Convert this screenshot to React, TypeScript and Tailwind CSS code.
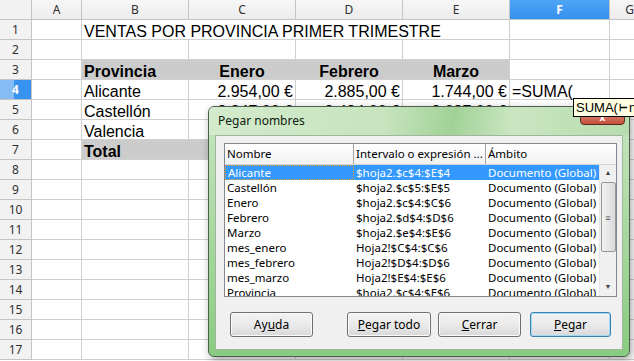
import React from "react";

const cols = [
  { key: "A", w: 50 },
  { key: "B", w: 107 },
  { key: "C", w: 107 },
  { key: "D", w: 107 },
  { key: "E", w: 107 },
  { key: "F", w: 100 },
  { key: "G", w: 40 },
];

const sheetFont = { fontFamily: '"Liberation Sans", Arial, sans-serif' };
const uiFont = { fontFamily: '"Noto Sans", "Open Sans", sans-serif' };

type Cell = { text?: string; align?: "left" | "right" | "center"; bold?: boolean; gray?: boolean };

const data: Record<number, Record<string, Cell>> = {
  3: {
    B: { text: "Provincia", bold: true, gray: true },
    C: { text: "Enero", bold: true, gray: true, align: "center" },
    D: { text: "Febrero", bold: true, gray: true, align: "center" },
    E: { text: "Marzo", bold: true, gray: true, align: "center" },
  },
  4: {
    B: { text: "Alicante" },
    C: { text: "2.954,00 €", align: "right" },
    D: { text: "2.885,00 €", align: "right" },
    E: { text: "1.744,00 €", align: "right" },
    F: { text: "=SUMA(" },
  },
  5: {
    B: { text: "Castellón" },
    C: { text: "3.347,00 €", align: "right" },
    D: { text: "2.484,00 €", align: "right" },
    E: { text: "2.087,00 €", align: "right" },
  },
  6: { B: { text: "Valencia" } },
  7: {
    B: { text: "Total", bold: true, gray: true },
    C: { gray: true },
    D: { gray: true },
    E: { gray: true },
  },
};

function SheetRow({ n }: { n: number }) {
  const active = n === 4;
  const row = data[n] || {};
  return (
    <div className="flex h-[20px]">
      <div
        className={`w-[32px] shrink-0 flex items-center justify-center border-r border-b border-[#c4c4c4] text-[12px] ${
          active
            ? "bg-[linear-gradient(to_right,#85bcf4_46%,#3893f0_46%)] text-white font-bold"
            : "bg-[#f2f2f2] text-[#303030]"
        }`}
        style={uiFont}
      >
        {n}
      </div>
      {n === 1 ? (
        <>
          <div className="w-[50px] shrink-0 border-r border-b border-[#d0d0d0] bg-white" />
          <div className="w-[428px] shrink-0 border-r border-b border-[#d0d0d0] bg-white text-[16px] leading-[19px] pt-[2px] text-black pl-[2px] whitespace-nowrap">
            VENTAS POR PROVINCIA PRIMER TRIMESTRE
          </div>
          <div className="w-[100px] shrink-0 border-r border-b border-[#d0d0d0] bg-white" />
          <div className="flex-1 border-b border-[#d0d0d0] bg-white" />
        </>
      ) : (
        cols.map((c, idx) => {
          const cell = row[c.key];
          const gray = cell?.gray;
          const nk = cols[idx + 1]?.key;
          const nextGray = nk ? row[nk]?.gray : false;
          const rightBorder = gray && nextGray ? "border-r-[#cccccc]" : "border-r-[#d0d0d0]";
          return (
            <div
              key={c.key}
              className={`shrink-0 border-r border-b border-b-[#d0d0d0] ${rightBorder} flex text-[16px] leading-[19px] pt-[2px] text-black whitespace-nowrap ${
                gray ? "bg-[#cccccc]" : "bg-white"
              } ${cell?.bold ? "font-bold" : ""} ${
                cell?.align === "right"
                  ? "justify-end pr-[2px]"
                  : cell?.align === "center"
                  ? "justify-center"
                  : "pl-[2px]"
              }`}
              style={{ width: c.w }}
            >
              {cell?.text}
            </div>
          );
        })
      )}
    </div>
  );
}

function Sheet() {
  return (
    <div className="w-[634px] h-[361px] overflow-hidden bg-white" style={sheetFont}>
      <div className="flex h-[20px]">
        <div className="w-[32px] shrink-0 border-r border-b border-[#c4c4c4] bg-[#f2f2f2]" />
        {cols.map((c) => (
          <div
            key={c.key}
            className={`shrink-0 border-r border-b border-[#c4c4c4] flex items-center justify-center text-[12px] ${
              c.key === "F"
                ? "bg-linear-to-b from-[#4da4f6] to-[#3590ef] text-white font-bold"
                : "bg-linear-to-b from-[#f7f7f7] to-[#ececec] text-[#303030]"
            }`}
            style={{ width: c.w, ...uiFont }}
          >
            {c.key}
          </div>
        ))}
      </div>
      {Array.from({ length: 17 }, (_, i) => (
        <SheetRow key={i} n={i + 1} />
      ))}
    </div>
  );
}

const names = [
  ["Alicante", "$hoja2.$c$4:$E$4"],
  ["Castellón", "$hoja2.$c$5:$E$5"],
  ["Enero", "$hoja2.$c$4:$C$6"],
  ["Febrero", "$hoja2.$d$4:$D$6"],
  ["Marzo", "$hoja2.$e$4:$E$6"],
  ["mes_enero", "Hoja2!$C$4:$C$6"],
  ["mes_febrero", "Hoja2!$D$4:$D$6"],
  ["mes_marzo", "Hoja2!$E$4:$E$6"],
  ["Provincia", "$hoja2.$c$4:$E$6"],
];

function Btn({ children, primary, w }: { children: React.ReactNode; primary?: boolean; w: number }) {
  return (
    <div
      className={`h-[25px] rounded-[3px] border flex items-center justify-center text-[12px] text-black bg-linear-to-b from-[#f2f2f2] via-[#ebebeb] to-[#d8d8d8] ${
        primary ? "border-[#3c7fb1] shadow-[inset_0_0_0_1px_#9fd9f5]" : "border-[#707070] shadow-[inset_0_0_0_1px_#fbfbfb]"
      }`}
      style={{ width: w }}
    >
      {children}
    </div>
  );
}

function Dialog() {
  return (
    <div
      className="absolute left-[208px] top-[106px] w-[422px] h-[251px] rounded-[6px] border border-[#4e5e4e] bg-linear-to-b from-[#c8e5c0] to-[#88cc80] shadow-[2px_3px_8px_rgba(0,0,0,0.35)] flex flex-col overflow-hidden"
      style={uiFont}
    >
      <div className="h-[28px] shrink-0 flex items-center pl-[9px] text-[12px] text-[#10200f] bg-[linear-gradient(100deg,#d3ebcc_0%,#c6e4be_42%,#a2d198_58%,#c9e6c1_72%,#b6dcae_100%)]">
        Pegar nombres
      </div>
      <div className="mx-[6px] mb-[6px] flex-1 bg-[#f0f0f0] border border-[#9fb59c] flex flex-col">
        <div className="mt-[7px] ml-[8px] mr-[5px] h-[154px] border border-[#828790] bg-white flex flex-col overflow-hidden">
          <div className="h-[21px] shrink-0 flex text-[11.5px] text-black bg-linear-to-b from-[#ffffff] to-[#f1f2f4] border-b border-[#d5d5d5]">
            <div className="w-[129px] border-r border-[#a5a5a5] flex items-center pl-[2px]">Nombre</div>
            <div className="w-[132px] border-r border-[#a5a5a5] flex items-center pl-[2px] whitespace-nowrap">
              Intervalo o expresión ...
            </div>
            <div className="flex-1 flex items-center pl-[2px]">Ámbito</div>
          </div>
          <div className="flex flex-1 overflow-hidden">
            <div className="flex-1 flex flex-col text-[11.5px] text-black overflow-hidden">
              {names.map(([n, r], i) => (
                <div
                  key={n}
                  className={`h-[15px] shrink-0 flex items-center whitespace-nowrap ${i === 0 ? "bg-[#3399ff] text-white" : ""}`}
                >
                  <div
                    className={`w-[129px] shrink-0 h-full flex items-center pl-[2px] ${
                      i === 0 ? "border border-dotted border-[#f0a030]" : ""
                    }`}
                  >
                    {n}
                  </div>
                  <div className="w-[132px] shrink-0 pl-[2px]">{r}</div>
                  <div className="pl-[2px]">Documento (Global)</div>
                </div>
              ))}
            </div>
            <div className="w-[17px] shrink-0 bg-[#f0f0f0] flex flex-col items-center border-l border-[#e6e6e6]">
              <div className="h-[17px] flex items-center justify-center text-[7px] text-[#404040]">▲</div>
              <div className="w-[15px] h-[70px] rounded-[2px] border border-[#979797] bg-linear-to-r from-[#f2f2f2] to-[#d9d9d9] flex items-center justify-center text-[9px] text-[#505050] leading-none">
                ≡
              </div>
              <div className="flex-1" />
              <div className="h-[17px] flex items-center justify-center text-[7px] text-[#404040]">▼</div>
            </div>
          </div>
        </div>
        <div className="flex mt-[15px] ml-[14px]">
          <Btn w={83}>
            Ay<span className="underline">u</span>da
          </Btn>
          <div className="w-[34px]" />
          <Btn w={84}>
            <span className="underline">P</span>egar todo
          </Btn>
          <div className="w-[7px]" />
          <Btn w={83}>
            <span className="underline">C</span>errar
          </Btn>
          <div className="w-[9px]" />
          <Btn w={81} primary>
            <span className="underline">P</span>egar
          </Btn>
        </div>
      </div>
    </div>
  );
}

export default function App() {
  return (
    <div className="relative w-[634px] h-[361px] overflow-hidden">
      <Sheet />
      <Dialog />
      <div className="absolute left-[580px] top-[106px] w-[45px] h-[19px] rounded-b-[4px] border border-[#5a2a20] bg-linear-to-b from-[#e6a08f] to-[#c4503a] flex items-end justify-center pb-[2px]">
        <span className="text-white text-[10px] font-bold leading-none">x</span>
      </div>
      <div
        className="absolute left-[573px] top-[98px] h-[19px] pl-[2px] pr-[20px] border border-black bg-[#ffffe1] text-[13px] text-black flex items-center whitespace-nowrap"
        style={sheetFont}
      >
        SUMA(<span className="mx-[1px] text-[10px] font-bold">⊢</span> n
      </div>
    </div>
  );
}
